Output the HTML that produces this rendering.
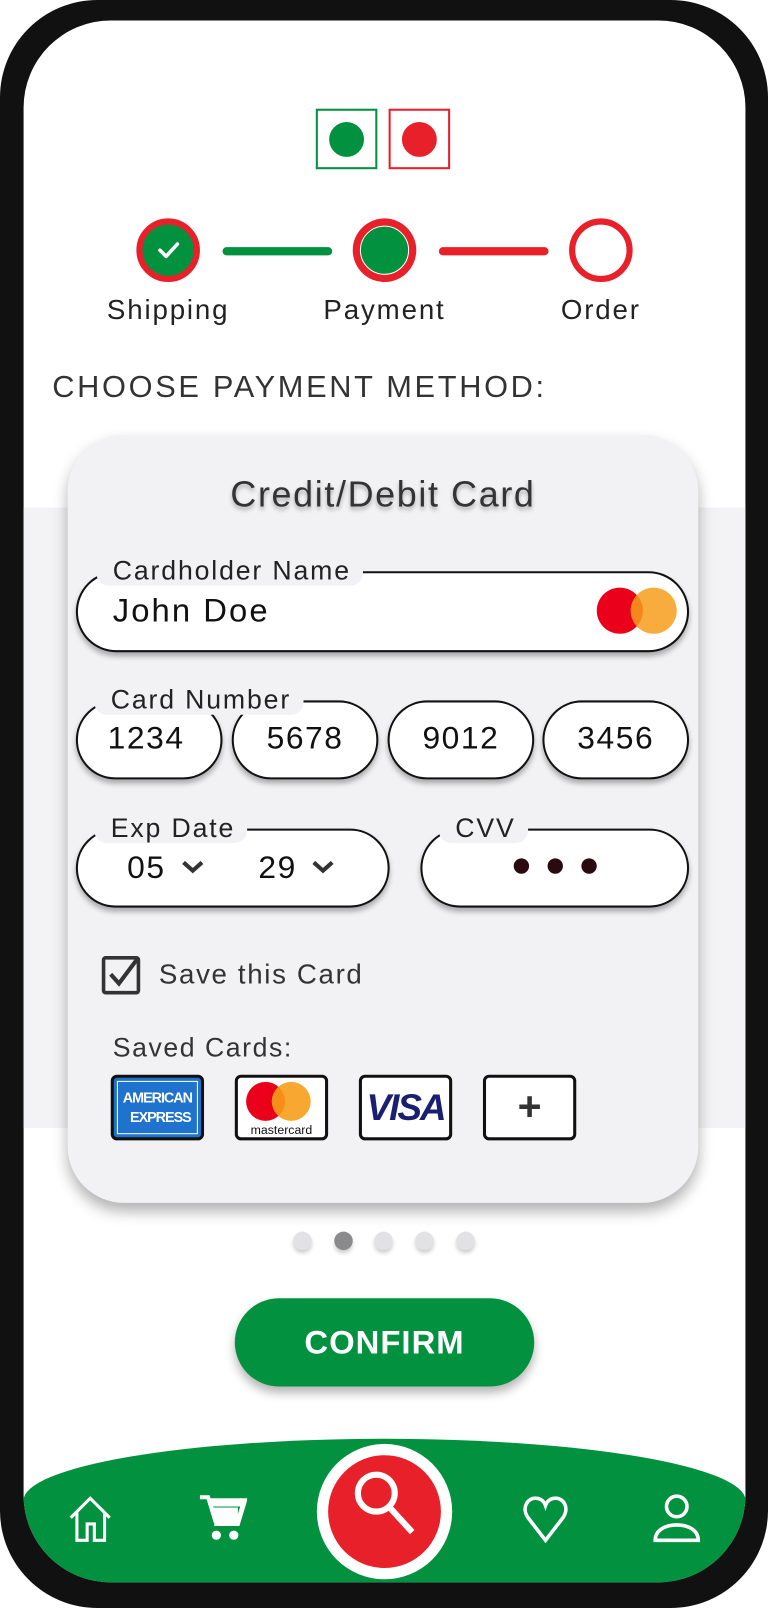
<!DOCTYPE html>
<html><head><meta charset="utf-8"><style>
*{margin:0;padding:0;box-sizing:border-box}
html,body{width:768px;height:1608px;overflow:hidden;background:#fff;font-family:"Liberation Sans",sans-serif;color:#222}
#w{position:absolute;left:0;top:0;width:749px;height:1568px;transform:scale(1.02537,1.02551);transform-origin:0 0}
.a{position:absolute}
.phone{left:0;top:0;width:749px;height:1568px;background:#111;border-radius:95px}
.screen{left:23px;top:20px;width:704px;height:1523px;background:#fff;border-radius:85px;overflow:hidden}
.band{left:0;top:475px;width:704px;height:605px;background:#f3f3f5}
.card{left:66px;top:424px;width:615px;height:749px;background:#f2f2f4;border-radius:55px;box-shadow:0 8px 14px rgba(0,0,0,.3)}
.pill{position:absolute;background:#fff;border:2px solid #111;border-radius:40px;box-shadow:0 4px 5px rgba(0,0,0,.3)}
.lbl{position:absolute;background:#f2f2f4;font-size:26px;letter-spacing:1.8px;padding:0 12px 0 16px;border-radius:12px;line-height:30px;color:#222}
.num{position:absolute;font-size:31px;letter-spacing:1.5px;text-align:center;color:#111}
.step{position:absolute;font-size:27px;letter-spacing:1.8px;color:#222;text-align:center;width:180px}
.sc{position:absolute;top:1048px;width:91px;height:64px;border:3px solid #111;border-radius:6px;background:#fff;overflow:hidden}
.dot{position:absolute;top:1201px;width:18px;height:18px;border-radius:50%;background:#e2e2e4;box-shadow:0 3px 4px rgba(0,0,0,.2)}
</style></head><body><div id="w">
<div class="a phone"></div>
<div class="a screen">
 <div class="a band"></div>
 <div class="a" style="left:0;top:1383px;width:704px;height:200px;background:#02913f;border-radius:50% 50% 0 0/60px 60px 0 0"></div>
</div>
<!-- logo -->
<div class="a" style="left:308px;top:106px;width:60px;height:59px;border:2px solid #02913f"></div>
<div class="a" style="left:321px;top:119px;width:34px;height:34px;border-radius:50%;background:#02913f"></div>
<div class="a" style="left:379px;top:106px;width:60px;height:59px;border:2px solid #e8202a"></div>
<div class="a" style="left:392px;top:119px;width:34px;height:34px;border-radius:50%;background:#e8202a"></div>
<!-- stepper -->
<div class="a" style="left:217px;top:241px;width:107px;height:8px;border-radius:4px;background:#02913f"></div>
<div class="a" style="left:428px;top:241px;width:107px;height:8px;border-radius:4px;background:#e8202a"></div>
<div class="a" style="left:133px;top:213px;width:62px;height:62px;border-radius:50%;border:6px solid #e8202a;background:#02913f"></div>
<svg class="a" style="left:148px;top:228px" width="32" height="32" viewBox="0 0 32 32"><path d="M8 16l6 6 11-12" fill="none" stroke="#fff" stroke-width="3.5" stroke-linecap="round" stroke-linejoin="round"/></svg>
<div class="a" style="left:344px;top:213px;width:62px;height:62px;border-radius:50%;background:#e8202a"></div>
<div class="a" style="left:351px;top:220px;width:48px;height:48px;border-radius:50%;background:#02913f;border:1.5px solid #fff"></div>
<div class="a" style="left:555px;top:213px;width:62px;height:62px;border-radius:50%;border:6px solid #e8202a;background:#fff"></div>
<div class="step" style="left:74px;top:287px">Shipping</div>
<div class="step" style="left:285px;top:287px">Payment</div>
<div class="step" style="left:496px;top:287px">Order</div>
<div class="a" style="left:51px;top:361px;font-size:30px;color:#333;letter-spacing:2.6px">CHOOSE PAYMENT METHOD:</div>
<!-- card -->
<div class="a card"></div>
<div class="a" style="left:66px;top:463px;width:615px;text-align:center;font-size:35px;letter-spacing:1.6px;color:#333;text-shadow:0 3px 4px rgba(0,0,0,.3)">Credit/Debit Card</div>
<div class="pill" style="left:74px;top:557px;width:598px;height:79px"></div>
<div class="lbl" style="left:94px;top:541px">Cardholder Name</div>
<div class="num" style="left:110px;top:577px;font-size:32px;letter-spacing:2px">John Doe</div>
<div class="a" style="left:582px;top:573px;width:45px;height:45px;border-radius:50%;background:#eb001b"></div>
<div class="a" style="left:615px;top:573px;width:45px;height:45px;border-radius:50%;background:#f79e1b;opacity:.85"></div>
<div class="pill" style="left:74px;top:683px;width:143px;height:77px"></div>
<div class="pill" style="left:226px;top:683px;width:143px;height:77px"></div>
<div class="pill" style="left:378px;top:683px;width:143px;height:77px"></div>
<div class="pill" style="left:529px;top:683px;width:143px;height:77px"></div>
<div class="lbl" style="left:92px;top:667px">Card Number</div>
<div class="num" style="left:74px;top:702px;width:143px;padding-right:6px">1234</div>
<div class="num" style="left:226px;top:702px;width:143px">5678</div>
<div class="num" style="left:378px;top:702px;width:143px">9012</div>
<div class="num" style="left:529px;top:702px;width:143px">3456</div>
<div class="pill" style="left:74px;top:808px;width:306px;height:77px"></div>
<div class="pill" style="left:410px;top:808px;width:262px;height:77px"></div>
<div class="lbl" style="left:92px;top:792px">Exp Date</div>
<div class="lbl" style="left:428px;top:792px">CVV</div>
<div class="num" style="left:124px;top:828px">05</div>
<div class="num" style="left:252px;top:828px">29</div>
<svg class="a" style="left:176px;top:838px" width="24" height="16"><path d="M3 3l9 8 9-8" fill="none" stroke="#333" stroke-width="4"/></svg>
<svg class="a" style="left:303px;top:838px" width="24" height="16"><path d="M3 3l9 8 9-8" fill="none" stroke="#333" stroke-width="4"/></svg>
<div class="a" style="left:501px;top:837px;width:15px;height:15px;border-radius:50%;background:#2a0a0e"></div>
<div class="a" style="left:534px;top:837px;width:15px;height:15px;border-radius:50%;background:#2a0a0e"></div>
<div class="a" style="left:567px;top:837px;width:15px;height:15px;border-radius:50%;background:#2a0a0e"></div>
<svg class="a" style="left:98px;top:928px" width="44" height="44"><rect x="3" y="6" width="34" height="34" rx="2" fill="none" stroke="#333" stroke-width="3.5"/><path d="M10 22l8 9 18-24" fill="none" stroke="#333" stroke-width="4"/></svg>
<div class="a" style="left:155px;top:935px;font-size:27px;letter-spacing:1.6px;color:#333">Save this Card</div>
<div class="a" style="left:110px;top:1006px;font-size:26px;letter-spacing:1.5px;color:#333">Saved Cards:</div>
<div class="sc" style="left:108px;background:#1f72cd"><div style="margin:3px;border:1.5px solid #fff;height:52px;color:#fff;font-weight:bold;font-size:14px;line-height:19px;text-align:center;letter-spacing:-1px;padding-top:6px">AMERICAN<br>&nbsp;&nbsp;EXPRESS</div></div>
<div class="sc" style="left:229px"><div class="a" style="left:8px;top:4px;width:38px;height:38px;border-radius:50%;background:#eb001b"></div><div class="a" style="left:33px;top:4px;width:38px;height:38px;border-radius:50%;background:#f79e1b;opacity:.9"></div><div class="a" style="left:0;top:44px;width:85px;text-align:center;font-size:12px;color:#111">mastercard</div></div>
<div class="sc" style="left:350px"><div style="text-align:center;font-weight:bold;font-style:italic;font-size:36px;color:#1a1f71;line-height:58px;letter-spacing:-2px">VISA</div></div>
<div class="sc" style="left:471px"><div style="text-align:center;font-weight:bold;font-size:40px;color:#333;line-height:56px">+</div></div>
<div class="dot" style="left:286px"></div>
<div class="dot" style="left:326px;background:#8a8a8c"></div>
<div class="dot" style="left:365px"></div>
<div class="dot" style="left:405px"></div>
<div class="dot" style="left:445px"></div>
<div class="a" style="left:229px;top:1266px;width:292px;height:86px;border-radius:43px;background:#02913f;box-shadow:0 6px 10px rgba(0,0,0,.3);color:#fff;font-weight:bold;font-size:32px;text-align:center;line-height:86px;letter-spacing:1px">CONFIRM</div>
<!-- nav -->
<div class="a" style="left:309px;top:1408px;width:132px;height:132px;border-radius:50%;background:#fff"></div>
<div class="a" style="left:320px;top:1419px;width:110px;height:110px;border-radius:50%;background:#e8202a"></div>
<svg class="a" style="left:340px;top:1428px" width="70" height="80"><circle cx="27" cy="28" r="18" fill="none" stroke="#fff" stroke-width="6"/><path d="M40 42l22 24" stroke="#fff" stroke-width="6"/></svg>
<svg class="a" style="left:66px;top:1458px" width="46" height="48" fill="none" stroke="#fff" stroke-width="3"><path d="M3 22L22 3l19 19M9 17v27h10V28h7v16h10V17"/></svg>
<svg class="a" style="left:193px;top:1457px" width="48" height="48" fill="#fff"><path d="M2 3h8l7 23h22l5-16H14l-2-4 34 0-7 23H16" stroke="#fff" stroke-width="4" fill="none"/><rect x="15" y="13" width="24" height="13"/><circle cx="18" cy="40" r="4.5"/><circle cx="35" cy="40" r="4.5"/></svg>
<svg class="a" style="left:509px;top:1458px" width="46" height="48"><path d="M23 44L6 22C-1 12 6 2 14 3c5 0 8 4 9 7 1-3 4-7 9-7 8-1 15 9 8 19z" fill="none" stroke="#fff" stroke-width="3.5"/></svg>
<svg class="a" style="left:636px;top:1456px" width="48" height="50" fill="none" stroke="#fff" stroke-width="3.5"><circle cx="24" cy="13" r="10"/><path d="M3 46c0-10 10-15 21-15s21 5 21 15z"/></svg>
</div></body></html>
